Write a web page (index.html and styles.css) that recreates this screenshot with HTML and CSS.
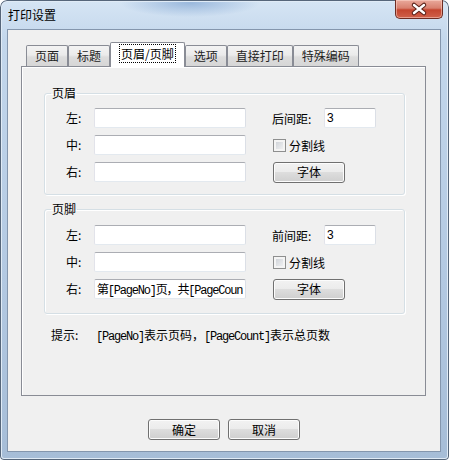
FILE: index.html
```html
<!DOCTYPE html>
<html>
  <head>
    <meta charset="utf-8" />
    <title>打印设置</title>
    <link rel="stylesheet" href="styles.css">
  </head>
  <body>
    <div class="window">
      <div class="titlebar">
        <span class="title">打印设置</span>
        <button class="close">
          <svg width="48" height="19" viewBox="0 0 48 19">
            <path d="M19 5 L29 13 M29 5 L19 13" stroke="#5a2219" stroke-width="4.5" stroke-linecap="round" />
            <path d="M19 5 L29 13 M29 5 L19 13" stroke="#ffffff" stroke-width="2.4" stroke-linecap="round" />
          </svg>
        </button>
      </div>

      <div class="client">
        <div class="tabs">
          <div class="tab">页面</div>
          <div class="tab">标题</div>
          <div class="tab tab-active"><span class="focus">页眉/页脚</span></div>
          <div class="tab">选项</div>
          <div class="tab">直接打印</div>
          <div class="tab">特殊编码</div>
        </div>

        <div class="panel">
          <fieldset class="group">
            <legend>页眉</legend>
            <div class="group-body">
              <label class="field-label">左:</label>
              <input class="text" type="text">
              <div class="side">
                <label class="side-label">后间距:</label>
                <input class="text text-num" type="text" value="3">
              </div>

              <label class="field-label">中:</label>
              <input class="text" type="text">
              <label class="side check-row"><input class="check" type="checkbox">分割线</label>

              <label class="field-label">右:</label>
              <input class="text" type="text">
              <div class="side"><button class="btn">字体</button></div>
            </div>
          </fieldset>

          <fieldset class="group group-footer">
            <legend>页脚</legend>
            <div class="group-body">
              <label class="field-label">左:</label>
              <input class="text" type="text">
              <div class="side">
                <label class="side-label">前间距:</label>
                <input class="text text-num" type="text" value="3">
              </div>

              <label class="field-label">中:</label>
              <input class="text" type="text">
              <label class="side check-row"><input class="check" type="checkbox">分割线</label>

              <label class="field-label">右:</label>
              <input class="text text-mono" type="text" value="第[PageNo]页，共[PageCount]页">
              <div class="side"><button class="btn">字体</button></div>
            </div>
          </fieldset>

          <p class="hint">
            <span class="hint-label">提示:</span><span class="mono">[PageNo]</span>表示页码，<span class="mono">[PageCount]</span>表示总页数
          </p>
        </div>

        <div class="actions">
          <button class="btn">确定</button>
          <button class="btn">取消</button>
        </div>
      </div>
    </div>
  </body>
</html>
```

FILE: styles.css
```css
body {
  margin: 0;
  font-family: "Noto Sans CJK SC", sans-serif;
  font-size: 12px;
  color: #000;
}

.window {
  width: 449px;
  height: 460px;
  box-sizing: border-box;
  display: flex;
  flex-direction: column;
  border-radius: 7px 7px 4px 4px;
  overflow: hidden;
  background:
    radial-gradient(ellipse 70px 14px at 190px 3px, #9ab8dc, rgba(154, 184, 220, 0)),
    linear-gradient(to bottom, #d6e5f4 0%, #c3d7ec 40px, #b3c9e2 60%, #a6bdd7 100%);
  box-shadow: inset 0 0 0 1px #56667a, inset 0 0 0 2px #e0ebf6;
}

.titlebar {
  height: 29px;
  display: flex;
  align-items: flex-start;
}

.title {
  padding: 7px 0 0 8px;
  line-height: 16px;
}

.close {
  margin-left: auto;
  margin-right: 6px;
  width: 48px;
  height: 19px;
  padding: 0;
  border: 1px solid #6e2c22;
  border-top: none;
  border-radius: 0 0 5px 5px;
  background: linear-gradient(to bottom, #e9a99b 0%, #d8806f 45%, #c4452f 55%, #d0614a 100%);
  box-shadow: inset 0 0 0 1px rgba(255, 220, 210, 0.5);
}

.close svg {
  display: block;
  margin: -1px;
}

.client {
  flex: 1;
  margin: 0 8px 8px 7px;
  border: 1px solid #8496ad;
  background: #f0f0f0;
  display: flex;
  flex-direction: column;
}

.tabs {
  display: flex;
  align-items: flex-end;
  height: 23px;
  margin-top: 13px;
  padding-left: 18px;
}

.tab {
  height: 21px;
  box-sizing: border-box;
  padding: 0 8px;
  line-height: 20px;
  border: 1px solid #898c95;
  border-bottom: none;
  border-radius: 2px 2px 0 0;
  background: linear-gradient(to bottom, #f3f3f3 0%, #ebebeb 45%, #dddddd 55%, #d6d6d6 100%);
  color: #222;
  margin-right: 0;
}

.tab-active {
  position: relative;
  z-index: 1;
  height: 25px;
  margin-bottom: -1px;
  padding: 0 9px;
  line-height: 22px;
  background: #ffffff;
  color: #000;
}

.focus {
  outline: 1px dotted #000;
  outline-offset: 0;
  padding: 0 1px;
}

.panel {
  height: 330px;
  box-sizing: border-box;
  margin: 0 14px 0 13px;
  border: 1px solid #898c95;
  background: #f0f0f0;
  box-shadow: inset 1px 1px 0 #ffffff;
  display: flex;
  flex-direction: column;
}

.group {
  margin: 18px 20px 0 22px;
  padding: 0;
  border: 1px solid #d5dfe5;
  border-radius: 3px;
  box-shadow: 1px 1px 0 #ffffff, inset 1px 1px 0 #ffffff;
}

.group legend {
  margin-left: 6px;
  padding: 0 1px;
  line-height: 16px;
}

.group-body {
  display: grid;
  grid-template-columns: 28px 152px 1fr;
  grid-auto-rows: 20px;
  row-gap: 7px;
  align-items: center;
  padding: 7px 0 12px 21px;
}

.group-footer {
  margin-top: 6px;
}

.group-footer .group-body {
  padding: 8px 0 14px 21px;
}

.field-label {
  line-height: 20px;
}

.text {
  box-sizing: border-box;
  width: 152px;
  height: 20px;
  margin: 0;
  padding: 0 2px;
  border: 1px solid;
  border-color: #abadb3 #dbdfe6 #e3e9ef #e2e3ea;
  border-radius: 2px;
  background: #fff;
  font-family: "Liberation Sans", "Noto Sans CJK SC", sans-serif;
  font-size: 12px;
  color: #000;
  outline: none;
}

.text-num {
  width: 52px;
}

.text-mono {
  font-family: "Liberation Mono", "Noto Sans CJK SC", monospace;
  letter-spacing: -1.2px;
}

.side {
  display: flex;
  align-items: center;
  margin-left: 26px;
}

.side-label {
  width: 52px;
}

.check-row {
  gap: 3px;
  margin-left: 27px;
}

.check {
  appearance: none;
  width: 13px;
  height: 13px;
  margin: 0;
  border: 1px solid #8e8f8f;
  background: linear-gradient(135deg, #c8ccd2 0%, #e4e6e9 60%, #f6f6f6 100%);
  box-shadow: inset 0 0 0 2px #f4f4f4;
}

.btn {
  width: 72px;
  height: 21px;
  padding: 0;
  border: 1px solid #707070;
  border-radius: 3px;
  background: linear-gradient(to bottom, #f2f2f2 0%, #ebebeb 50%, #dddddd 50%, #cfcfcf 100%);
  box-shadow: inset 0 0 0 1px #fcfcfc;
  font-family: "Noto Sans CJK SC", sans-serif;
  font-size: 12px;
  line-height: 18px;
  color: #000;
}

.side .btn {
  margin-left: 1px;
}

.hint {
  margin: 13px 0 0 29px;
  line-height: 16px;
  white-space: nowrap;
}

.hint-label {
  display: inline-block;
  width: 45px;
}

.mono {
  font-family: "Liberation Mono", monospace;
  letter-spacing: -1.2px;
}

.actions {
  display: flex;
  justify-content: center;
  gap: 8px;
  margin-top: 23px;
}
```
